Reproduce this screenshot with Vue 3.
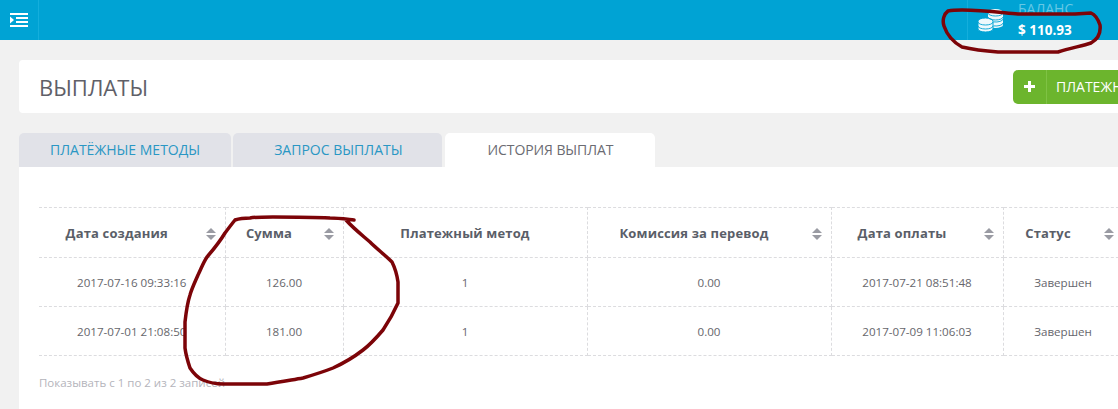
<template>
  <div class="page">
    <header class="topbar">
      <button class="menu-toggle" aria-label="Меню">
        <svg width="18" height="14" viewBox="0 0 18 14" fill="#fff">
          <rect x="0" y="0" width="18" height="2" />
          <rect x="6" y="4" width="12" height="2" />
          <rect x="6" y="8" width="12" height="2" />
          <rect x="0" y="12" width="18" height="2" />
          <path d="M0 3.500L4 7L0 10.500z" />
        </svg>
      </button>
      <div class="balance">
        <svg class="coins" width="25" height="24" viewBox="0 0 25 24">
          <g fill="#eef9fc">
            <path d="M10 3a7.500 3 0 0 1 15 0v13a7.500 3 0 0 1-15 0z" />
            <path d="M0 12a7.500 3 0 0 1 15 0v8a7.500 3 0 0 1-15 0z" stroke="#00a3d4" stroke-width="1" />
          </g>
          <g fill="none" stroke="#00a3d4" stroke-width="0.900">
            <path d="M10 4a7.500 3 0 0 0 15 0" />
            <path d="M10 8a7.500 3 0 0 0 15 0" />
            <path d="M15.500 12.900a7.500 3 0 0 0 9.500-2.900" />
            <path d="M15.500 16.900a7.500 3 0 0 0 9.500-2.900" />
            <path d="M0 13a7.500 3 0 0 0 15 0" />
            <path d="M0 17a7.500 3 0 0 0 15 0" />
          </g>
        </svg>
        <div class="balance-text">
          <span class="balance-label">БАЛАНС</span>
          <span class="balance-value">$ 110.93</span>
        </div>
      </div>
    </header>

    <main class="content">
      <div class="title-card">
        <h1>ВЫПЛАТЫ</h1>
        <button class="add-btn">
          <span class="add-icon">
            <svg width="11" height="11" viewBox="0 0 11 11" fill="#fff">
              <path d="M4 0h3v4h4v3H7v4H4V7H0V4h4z" />
            </svg>
          </span>
          <span class="add-label">ПЛАТЕЖНЫЙ МЕТОД</span>
        </button>
      </div>

      <nav class="tabs">
        <a v-for="tab in tabs" :key="tab.name" :class="['tab', { active: tab.active }]">{{ tab.name }}</a>
      </nav>

      <section class="panel">
        <table>
          <thead>
            <tr>
              <th v-for="col in columns" :key="col.name" :class="{ sortable: col.sort }" :style="{ width: col.width + 'px' }">
                {{ col.name }}
                <svg v-if="col.sort" class="sort" width="10" height="12" viewBox="0 0 10 12" fill="#9a9ba3">
                  <path d="M5 0L10 5H0z" />
                  <path d="M0 7H10L5 12z" />
                </svg>
              </th>
            </tr>
          </thead>
          <tbody>
            <tr v-for="row in rows" :key="row.created">
              <td>{{ row.created }}</td>
              <td>{{ row.amount }}</td>
              <td>{{ row.method }}</td>
              <td>{{ row.fee }}</td>
              <td>{{ row.paid }}</td>
              <td>{{ row.status }}</td>
            </tr>
          </tbody>
        </table>
        <p class="info">Показывать с 1 по 2 из 2 записей</p>
      </section>
    </main>

    <!-- пометки маркером поверх скриншота -->
    <svg class="marks" width="1118" height="409" viewBox="0 0 1118 409" fill="none" stroke="#7c0408" stroke-width="3.500" stroke-linejoin="round" stroke-linecap="round">
      <path d="M948 11C944 14 942 20 944 26C947 35 953 42 962 47C975 50 985 51 998 52L1058 52C1070 48 1082 46 1091 43C1098 39 1101 33 1100 25C1098 19 1096 15 1091 13L1075 14L1018 14C995 12 965 8 948 11Z" />
      <path d="M354 220C345 219 338 218 330 218C310 217 290 217 273 217C262 217 255 217 250 218C243 218 238 219 235 220C231 225 228 229 225 233C219 243 213 250 207 257C203 263 201 269 198 275C195 282 192 288 190 295C187 304 186 313 185 322L185 348C186 356 188 362 190 368C194 374 198 378 203 380C210 383 216 384 223 384L267 384C280 382 291 380 303 378C313 375 323 372 333 368C344 363 354 357 363 350C371 344 377 337 383 330C389 321 394 312 398 303L398 282C397 275 395 268 392 262C385 255 377 249 370 242C362 235 353 228 346 220" />
    </svg>
  </div>
</template>

<script setup>
const tabs = [
  { name: 'ПЛАТЁЖНЫЕ МЕТОДЫ' },
  { name: 'ЗАПРОС ВЫПЛАТЫ' },
  { name: 'ИСТОРИЯ ВЫПЛАТ', active: true }
]

const columns = [
  { name: 'Дата создания', width: 186, sort: true },
  { name: 'Сумма', width: 118, sort: true },
  { name: 'Платежный метод', width: 244, sort: false },
  { name: 'Комиссия за перевод', width: 244, sort: true },
  { name: 'Дата оплаты', width: 172, sort: true },
  { name: 'Статус', width: 120, sort: true }
]

const rows = [
  { created: '2017-07-16 09:33:16', amount: '126.00', method: '1', fee: '0.00', paid: '2017-07-21 08:51:48', status: 'Завершен' },
  { created: '2017-07-01 21:08:50', amount: '181.00', method: '1', fee: '0.00', paid: '2017-07-09 11:06:03', status: 'Завершен' }
]
</script>

<style>
body {
  margin: 0;
  background: #f1f1f1;
}
</style>

<style scoped>
.page {
  position: relative;
  width: 1118px;
  height: 409px;
  overflow: hidden;
  background: #f1f1f1;
  font-family: "Open Sans", "Liberation Sans", sans-serif;
}

.topbar {
  display: flex;
  justify-content: space-between;
  height: 40px;
  background: #00a3d4;
}

.menu-toggle {
  display: flex;
  align-items: center;
  justify-content: center;
  width: 39px;
  height: 40px;
  padding: 0 1px 0 0;
  background: none;
  border: none;
  border-right: 1px solid #14aedc;
}

.balance {
  display: flex;
  align-items: center;
  width: 151px;
  box-sizing: border-box;
  padding-left: 10px;
  border-left: 1px solid #14aedc;
}

.coins {
  flex: none;
  margin-top: 2px;
}

.balance-text {
  display: flex;
  flex-direction: column;
  margin-left: 15px;
  gap: 5px;
  margin-top: -2px;
}

.balance-label {
  font-size: 14px;
  line-height: 16px;
  color: #66c8e5;
}

.balance-value {
  font-size: 13.500px;
  line-height: 16px;
  font-weight: 700;
  color: #fff;
}

.content {
  width: 1300px;
  margin-left: 19px;
  padding-top: 20px;
}

.title-card {
  display: flex;
  align-items: center;
  height: 53px;
  padding-left: 20px;
  background: #fff;
  border-radius: 4px 0 0 4px;
}

h1 {
  width: 974px;
  margin: 0;
  font-size: 22px;
  font-weight: 400;
  color: #606068;
}

.add-btn {
  display: flex;
  align-items: center;
  height: 34px;
  padding: 0;
  background: #6cb52d;
  border: none;
  border-radius: 5px;
  color: #fff;
  font-family: inherit;
  white-space: nowrap;
}

.add-icon {
  display: flex;
  align-items: center;
  justify-content: center;
  box-sizing: border-box;
  width: 34px;
  height: 34px;
  border-right: 1px solid #7fc244;
}

.add-label {
  padding: 0 16px 0 9px;
  font-size: 14px;
}

.tabs {
  display: flex;
  gap: 2px;
  margin-top: 20px;
}

.tab {
  display: block;
  height: 34px;
  line-height: 34px;
  padding: 0 31px;
  background: #e1e2e8;
  border-radius: 5px 5px 0 0;
  color: #2a97c4;
  font-size: 14px;
}

.tab:nth-child(2) {
  padding: 0 39px 0 41px;
}

.tab.active {
  margin-left: 1px;
  padding: 0 42px 0 43px;
  background: #fff;
  color: #6b6b72;
  letter-spacing: -0.1px;
}

.panel {
  height: 242px;
  padding: 40px 0 0 20px;
  background: #fff;
}

table {
  table-layout: fixed;
  width: 1084px;
  border-collapse: collapse;
}

th,
td {
  box-sizing: border-box;
  border: 1px dashed #dcdcdf;
  text-align: center;
  overflow: hidden;
  white-space: nowrap;
}

th:first-child,
td:first-child {
  border-left: none;
}

th {
  position: relative;
  height: 50px;
  padding: 0;
  font-size: 13px;
  font-weight: 700;
  letter-spacing: 0.15px;
  color: #5a5e68;
}

th.sortable {
  padding-right: 30px;
}

.sort {
  position: absolute;
  top: 20px;
  right: 9px;
}

td {
  height: 49px;
  padding: 0;
  font-size: 11.600px;
  color: #66666c;
}

.info {
  margin: 19px 0 0;
  font-size: 11.500px;
  line-height: 15px;
  color: #b4b4bb;
}

.marks {
  position: absolute;
  top: 0;
  left: 0;
  pointer-events: none;
}
</style>
